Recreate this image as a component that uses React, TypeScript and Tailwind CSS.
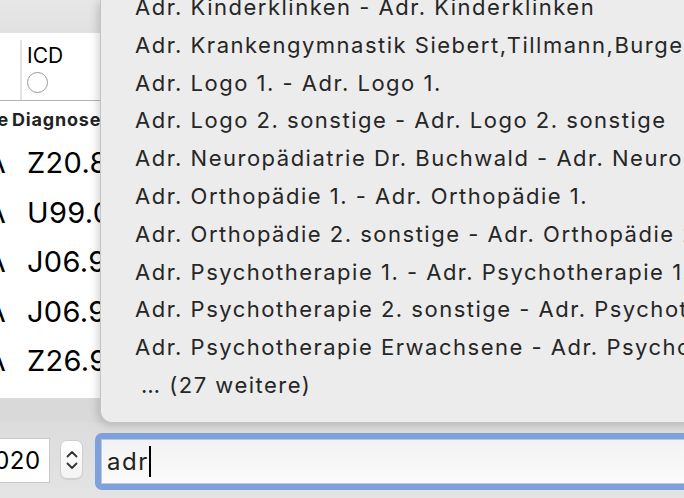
import React from "react";

const items = [
  "Adr. Kinderklinken - Adr. Kinderklinken",
  "Adr. Krankengymnastik Siebert,Tillmann,Burger - Adr. Krankengymnastik",
  "Adr. Logo 1. - Adr. Logo 1.",
  "Adr. Logo 2. sonstige - Adr. Logo 2. sonstige",
  "Adr. Neuropädiatrie Dr. Buchwald - Adr. Neuropädiatrie",
  "Adr. Orthopädie 1. - Adr. Orthopädie 1.",
  "Adr. Orthopädie 2. sonstige - Adr. Orthopädie 2. sonstige",
  "Adr. Psychotherapie 1. - Adr. Psychotherapie 1.",
  "Adr. Psychotherapie 2. sonstige - Adr. Psychotherapie 2.",
  "Adr. Psychotherapie Erwachsene - Adr. Psychotherapie",
];

const rows = ["Z20.8", "U99.0", "J06.9", "J06.9", "Z26.9"];

export default function App() {
  return (
    <div
      className="relative w-[684px] h-[498px] overflow-hidden bg-[#e3e3e3] flex flex-col"
      style={{ fontFamily: "Inter, 'Noto Sans', sans-serif" }}
    >
      {/* top strip */}
      <div className="h-[33px] bg-gradient-to-b from-[#e7e7e7] to-[#e1e1e1] shrink-0" />

      {/* table */}
      <div className="h-[365px] bg-white shrink-0 flex flex-col overflow-hidden">
        <div className="h-[68px] border-b border-[#b5b5b5] flex shrink-0">
          <div className="w-[20px] shrink-0" />
          <div className="w-[2px] mt-[7px] bg-[#e3e3e3] shrink-0" />
          <div className="pl-[5px] flex flex-col">
            <div className="text-[21px] leading-[21px] mt-[12px] text-black">ICD</div>
            <div className="mt-[6px] w-[21px] h-[21px] rounded-full border border-[#9a9a9a] bg-white" />
          </div>
        </div>
        <div className="h-[37px] flex items-center text-[18px] tracking-[0.8px] font-bold text-[#222] shrink-0">
          <span className="w-[9px] overflow-hidden flex justify-end shrink-0">
            <span>e</span>
          </span>
          <span className="ml-[3px] whitespace-nowrap">Diagnose</span>
        </div>
        {rows.map((r, i) => (
          <div key={i} className="h-[49.5px] flex items-center text-[29px] tracking-[0.3px] text-black shrink-0">
            <span className="w-[6px] overflow-hidden flex justify-end shrink-0">
              <span>A</span>
            </span>
            <span className="ml-[21px] whitespace-nowrap">{r}</span>
          </div>
        ))}
      </div>

      {/* band */}
      <div className="h-[24px] bg-[#d9d9d9] shrink-0" />

      {/* toolbar */}
      <div className="flex-1 bg-gradient-to-b from-[#dcdcdc] to-[#e4e4e4] flex items-start">
        <div className="mt-[16px] -ml-[30px] w-[80px] h-[45px] bg-white border border-[#c9c9c9] pl-[8px] flex items-center text-[24px] tracking-[0.5px] text-black shrink-0">
          2020
        </div>
        <div className="mt-[18px] ml-[10px] w-[23px] h-[39px] rounded-[7px] bg-gradient-to-b from-white to-[#f3f3f3] border border-[#cfcfcf] shadow-[0_1px_1px_rgba(0,0,0,0.08)] flex flex-col items-center justify-center gap-[4px] shrink-0">
          <svg width="12" height="8" viewBox="0 0 12 8" fill="none">
            <path d="M1.5 6.5 L6 2 L10.5 6.5" stroke="#333" strokeWidth="1.8" strokeLinecap="round" strokeLinejoin="round" />
          </svg>
          <svg width="12" height="8" viewBox="0 0 12 8" fill="none">
            <path d="M1.5 1.5 L6 6 L10.5 1.5" stroke="#333" strokeWidth="1.8" strokeLinecap="round" strokeLinejoin="round" />
          </svg>
        </div>
        <div className="mt-[11px] ml-[12px] flex-1 -mr-[10px] h-[57px] rounded-[7px] bg-[#7ea1db] p-[6px]">
          <div className="h-[45px] bg-gradient-to-b from-[#f2f2f2] to-[#fbfbfb] border border-[#b9c7e0] flex items-center pl-[5px] text-[24px] tracking-[1.5px] text-[#222]">
            <span>adr</span>
            <span className="w-[2px] h-[31px] bg-black" />
          </div>
        </div>
      </div>

      {/* popup menu */}
      <div className="absolute left-[100px] top-0 w-[600px] h-[423px] rounded-bl-[12px] bg-[#ececec] border-l border-b border-[#c4c4c4] shadow-[-2px_2px_10px_rgba(0,0,0,0.18)] overflow-hidden">
        <div className="-mt-[11px] pl-[34px] text-[22px] tracking-[1.5px] leading-[37.8px] text-[#262626]">
          {items.map((t, i) => (
            <div key={i} className="whitespace-nowrap">{t}</div>
          ))}
          <div className="whitespace-nowrap pl-[6px]">… (27 weitere)</div>
        </div>
      </div>
    </div>
  );
}
